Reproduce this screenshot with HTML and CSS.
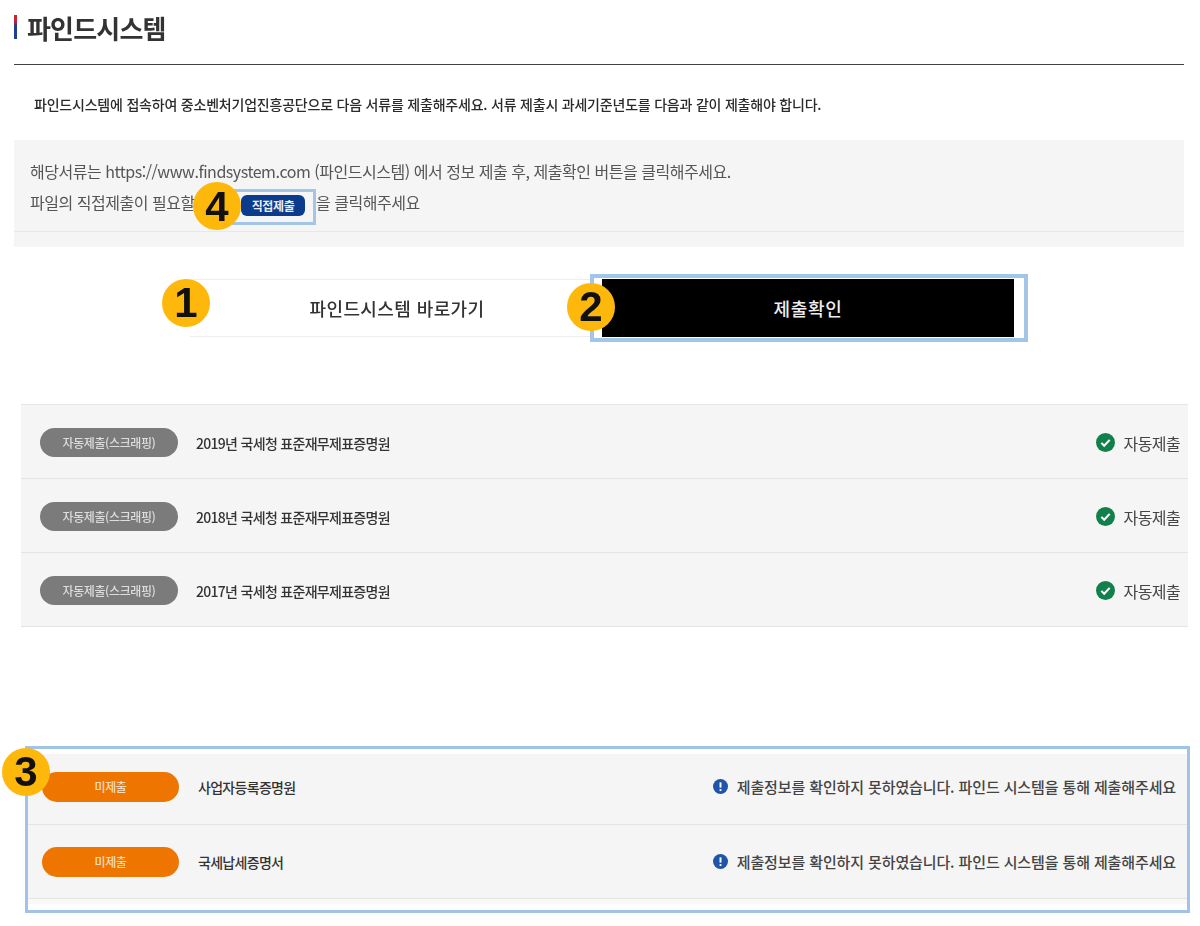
FILE: index.html
```html
<!DOCTYPE html>
<html lang="ko">
<head>
<meta charset="utf-8">
<title>파인드시스템</title>
<link rel="stylesheet" href="styles.css">
</head>
<body>
<main class="page">
  <header class="head">
    <h1 class="title">파인드시스템</h1>
  </header>
  <p class="intro">파인드시스템에 접속하여 중소벤처기업진흥공단으로 다음 서류를 제출해주세요. 서류 제출시 과세기준년도를 다음과 같이 제출해야 합니다.</p>
  <section class="notice">
    <div class="notice-body">
      <p class="notice-line">해당서류는 https://www.findsystem.com (파인드시스템) 에서 정보 제출 후, 제출확인 버튼을 클릭해주세요.</p>
      <p class="notice-line"><span class="lead">파일의 직접제출이 필요할</span><span class="frame-small"><span class="direct">직접제출</span><span class="step step-4">4</span></span><span>을 클릭해주세요</span></p>
    </div>
  </section>
  <section class="actions">
    <a class="go">파인드시스템 바로가기<span class="step step-1">1</span></a>
    <div class="frame-submit">
      <a class="submit">제출확인</a>
      <span class="step step-2">2</span>
    </div>
  </section>
  <section class="list">
    <div class="row">
      <span class="pill pill-gray">자동제출(스크래핑)</span>
      <span class="doc">2019년 국세청 표준재무제표증명원</span>
      <span class="status">
        <svg class="ic" viewBox="0 0 20 20"><circle cx="10" cy="10" r="10" fill="#12804a"/><path d="M5.6 10.4l3 3 5.8-6.2" fill="none" stroke="#fff" stroke-width="2.2"/></svg>
        <span class="auto">자동제출</span>
      </span>
    </div>
    <div class="row">
      <span class="pill pill-gray">자동제출(스크래핑)</span>
      <span class="doc">2018년 국세청 표준재무제표증명원</span>
      <span class="status">
        <svg class="ic" viewBox="0 0 20 20"><circle cx="10" cy="10" r="10" fill="#12804a"/><path d="M5.6 10.4l3 3 5.8-6.2" fill="none" stroke="#fff" stroke-width="2.2"/></svg>
        <span class="auto">자동제출</span>
      </span>
    </div>
    <div class="row">
      <span class="pill pill-gray">자동제출(스크래핑)</span>
      <span class="doc">2017년 국세청 표준재무제표증명원</span>
      <span class="status">
        <svg class="ic" viewBox="0 0 20 20"><circle cx="10" cy="10" r="10" fill="#12804a"/><path d="M5.6 10.4l3 3 5.8-6.2" fill="none" stroke="#fff" stroke-width="2.2"/></svg>
        <span class="auto">자동제출</span>
      </span>
    </div>
  </section>
  <section class="missing">
    <span class="step step-3">3</span>
    <div class="row row-missing row-first">
      <span class="pill pill-orange">미제출</span>
      <span class="doc">사업자등록증명원</span>
      <span class="status">
        <svg class="ic-info" viewBox="0 0 20 20"><circle cx="10" cy="10" r="10" fill="#1f55a8"/><path d="M10 4.5v7" stroke="#fff" stroke-width="2.6"/><circle cx="10" cy="14.8" r="1.5" fill="#fff"/></svg>
        <span class="warn">제출정보를 확인하지 못하였습니다. 파인드 시스템을 통해 제출해주세요</span>
      </span>
    </div>
    <div class="row row-missing">
      <span class="pill pill-orange">미제출</span>
      <span class="doc">국세납세증명서</span>
      <span class="status">
        <svg class="ic-info" viewBox="0 0 20 20"><circle cx="10" cy="10" r="10" fill="#1f55a8"/><path d="M10 4.5v7" stroke="#fff" stroke-width="2.6"/><circle cx="10" cy="14.8" r="1.5" fill="#fff"/></svg>
        <span class="warn">제출정보를 확인하지 못하였습니다. 파인드 시스템을 통해 제출해주세요</span>
      </span>
    </div>
    <div class="missing-end"></div>
  </section>
</main>
</body>
</html>
```
FILE: styles.css
```css
* { box-sizing: border-box; }
html, body { margin: 0; padding: 0; background: #fff; }
body {
  width: 1200px;
  height: 926px;
  overflow: hidden;
  font-family: "Noto Sans CJK KR", "Noto Sans", sans-serif;
  color: #333;
}
p, h1 { margin: 0; }
.page { position: relative; filter: blur(0.45px); }

.head {
  height: 65px;
  margin: 0 16px 0 14px;
  border-bottom: 1px solid #444;
  padding-top: 15px;
}
.title {
  height: 24px;
  display: flex;
  align-items: center;
  gap: 10px;
  font-size: 26px;
  font-weight: 700;
  letter-spacing: -0.8px;
  color: #333;
}
.title::before {
  content: "";
  flex: none;
  width: 3px;
  height: 24px;
  background: linear-gradient(#c8243c 0 25%, #1c3f8f 45%);
}
.intro {
  height: 75px;
  padding: 28px 0 0 34px;
  font-size: 14px;
  line-height: 22px;
  font-weight: 500;
  letter-spacing: -0.21px;
  color: #2b2b2b;
  white-space: nowrap;
}

.notice {
  height: 107px;
  margin: 0 16px 0 14px;
  background: #f5f5f5;
}
.notice-body {
  height: 92px;
  padding: 16px 0 0 16px;
  border-bottom: 1px solid #e8e8e8;
}
.notice-line {
  height: 31px;
  line-height: 31px;
  font-size: 16px;
  letter-spacing: -0.47px;
  color: #555;
  white-space: nowrap;
  display: flex;
  align-items: center;
}
.lead { flex: none; width: 175px; }
.frame-small {
  position: relative;
  flex: none;
  width: 111px;
  height: 36px;
  margin-top: 9px;
  border: 3px solid #a3c5e8;
  background: #f5f5f5;
  display: flex;
  align-items: center;
  padding-left: 33px;
}
.direct {
  width: 64px;
  height: 21px;
  margin-top: -4px;
  border-radius: 6px;
  background: #0b3b8c;
  color: #e8eef8;
  font-size: 12px;
  font-weight: 700;
  letter-spacing: -0.4px;
  line-height: 21px;
  text-align: center;
}

.actions {
  display: flex;
  align-items: center;
  height: 68px;
  margin: 27px 0 0 190px;
}
.go {
  position: relative;
  width: 400px;
  height: 58px;
  border-top: 1px solid #eee;
  border-bottom: 1px solid #eee;
  display: flex;
  align-items: center;
  justify-content: center;
  font-size: 18px;
  font-weight: 500;
  letter-spacing: 0.4px;
  color: #333;
  padding-left: 14px;
}
.frame-submit {
  position: relative;
  width: 438px;
  height: 68px;
  border: 4px solid #a3c5e8;
  padding: 1px 10px 1px 8px;
}
.submit {
  height: 58px;
  background: #000;
  color: #eee;
  display: flex;
  align-items: center;
  justify-content: center;
  font-size: 18px;
  font-weight: 500;
  letter-spacing: 0.7px;
}

.list {
  margin: 62px 12px 0 21px;
  border-top: 1px solid #e6e6e6;
}
.row {
  height: 74px;
  display: flex;
  align-items: center;
  background: #f5f5f5;
  border-bottom: 1px solid #e4e4e4;
  padding: 2px 8px 0 19px;
  font-size: 13px;
}
.pill {
  flex: none;
  width: 138px;
  height: 29px;
  border-radius: 15px;
  display: flex;
  align-items: center;
  justify-content: center;
  font-size: 12px;
  font-weight: 500;
  letter-spacing: -0.4px;
  color: #ddd;
}
.pill-gray { background: #7b7b7b; }
.pill-orange { background: #ee7500; height: 30px; width: 137px; color: #f7dcc0; }
.doc {
  margin-left: 18px;
  font-size: 14px;
  letter-spacing: -0.7px;
  color: #333;
  font-weight: 500;
}
.status {
  margin-left: auto;
  display: flex;
  align-items: center;
  white-space: nowrap;
}
.ic { width: 19px; height: 19px; margin-right: 9px; }
.ic-info { width: 15px; height: 15px; margin-right: 9px; }
.auto { font-size: 16px; letter-spacing: -0.6px; color: #444; }
.warn { font-size: 15px; letter-spacing: -0.12px; color: #444; font-weight: 500; }

.missing {
  position: relative;
  margin: 119px 10px 0 25px;
  height: 167px;
  border: 3px solid #a0c3e7;
  padding-top: 5px;
}
.row-missing {
  height: 74px;
  padding: 0 11px 0 14px;
}
.row-first {
  height: 71px;
  padding-bottom: 5px;
}
.row-missing .doc { margin-left: 19px; letter-spacing: -0.7px; }
.missing-end { height: 5px; background: #f8f8f8; }

.step {
  position: absolute;
  width: 48px;
  height: 48px;
  border-radius: 50%;
  background: #fdb80b;
  color: #111;
  display: flex;
  align-items: center;
  justify-content: center;
  font-family: "Liberation Sans", Arial, sans-serif;
  font-size: 42px;
  font-weight: 700;
  letter-spacing: 0;
  z-index: 2;
}
.step-1 { left: -28px; top: -1px; }
.step-2 { left: -27px; top: 5px; }
.step-3 { left: -26px; top: -1px; }
.step-4 { left: -15px; top: -10px; }
```
